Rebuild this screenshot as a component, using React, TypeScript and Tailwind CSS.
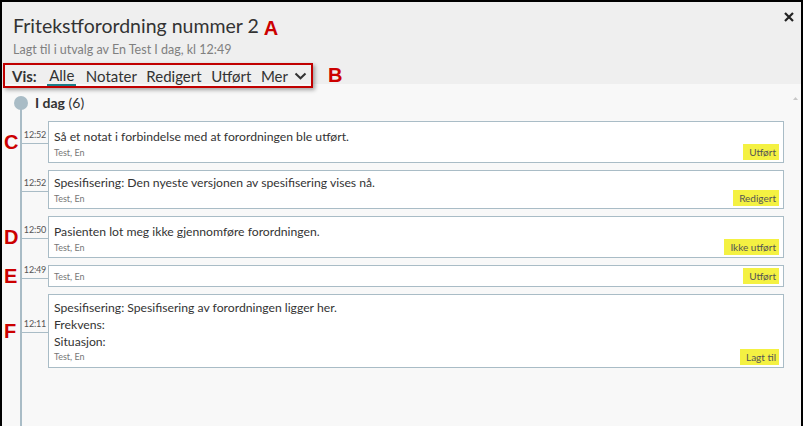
import React from "react";

type Entry = {
  letter?: string;
  time: string;
  lines: string[];
  author: string;
  status: string;
  pt: string;
  leading: string;
  pb: string;
};

const entries: Entry[] = [
  {
    letter: "C",
    time: "12:52",
    lines: ["Så et notat i forbindelse med at forordningen ble utført."],
    author: "Test, En",
    status: "Utført",
    pt: "pt-[6px]",
    leading: "leading-[18px]",
    pb: "pb-[2px]",
  },
  {
    time: "12:52",
    lines: ["Spesifisering: Den nyeste versjonen av spesifisering vises nå."],
    author: "Test, En",
    status: "Redigert",
    pt: "pt-[3px]",
    leading: "leading-[18px]",
    pb: "pb-[2px]",
  },
  {
    letter: "D",
    time: "12:50",
    lines: ["Pasienten lot meg ikke gjennomføre forordningen."],
    author: "Test, En",
    status: "Ikke utført",
    pt: "pt-[6px]",
    leading: "leading-[18px]",
    pb: "pb-[2px]",
  },
  {
    letter: "E",
    time: "12:49",
    lines: [],
    author: "Test, En",
    status: "Utført",
    pt: "pt-[4px]",
    leading: "leading-[18px]",
    pb: "pb-[2px]",
  },
  {
    letter: "F",
    time: "12:11",
    lines: [
      "Spesifisering: Spesifisering av forordningen ligger her.",
      "Frekvens:",
      "Situasjon:",
    ],
    author: "Test, En",
    status: "Lagt til",
    pt: "pt-[4px]",
    leading: "leading-[17px]",
    pb: "pb-[3px]",
  },
];

function Marker({ children }: { children: React.ReactNode }) {
  return (
    <span className="font-['Liberation_Sans',Arial,sans-serif] font-bold text-[20px] leading-[20px] text-[#cc0000]">
      {children}
    </span>
  );
}

function TimelineRow({ entry }: { entry: Entry }) {
  return (
    <div className="flex items-stretch">
      <div className="w-[20px] flex items-center pl-[2px]">
        {entry.letter && <Marker>{entry.letter}</Marker>}
      </div>
      {/* time label sits on top of the connector */}
      <div className="w-[26px] flex flex-col">
        <div className="flex-1 flex items-end justify-end border-b border-[#a9bcc6] pr-[2px] pb-[3px]">
          <span className="text-[9px] leading-[10px] text-[#555] tracking-[-0.2px]">
            {entry.time}
          </span>
        </div>
        <div className="flex-1" />
      </div>
      <div
        className={`relative flex-1 mr-[17px] bg-white border border-[#a9bcc6] pl-[5px] ${entry.pt} ${entry.pb}`}
      >
        {entry.lines.map((line) => (
          <div key={line} className={`text-[12.2px] text-[#333] ${entry.leading}`}>
            {line}
          </div>
        ))}
        <div className="text-[9px] leading-[14px] text-[#777]">{entry.author}</div>
        <div className="absolute right-[4px] bottom-[2px] h-[16px] min-w-[36px] pl-[6px] pr-[3px] flex items-center justify-end bg-[#f4f142] text-[10px] text-[#555]">
          {entry.status}
        </div>
      </div>
    </div>
  );
}

export default function App() {
  const tabs = ["Notater", "Redigert", "Utført"];

  return (
    <div className="w-[803px] h-[426px] overflow-hidden border-2 border-b-0 border-black bg-[#f8f8f8] flex flex-col font-['Lato',sans-serif]">
      <header className="h-[82px] shrink-0 bg-[#efefef] flex">
        <div className="flex-1 flex flex-col pl-[1px]">
          <div className="flex items-center pl-[10px] pt-[8px]">
            <h1 className="text-[19.5px] leading-[24px] text-[#333] font-normal">
              Fritekstforordning nummer 2
            </h1>
            <span className="ml-[5px] mt-[7px]">
              <Marker>A</Marker>
            </span>
          </div>
          <p className="mt-[1px] pl-[10px] text-[12.5px] leading-[16px] text-[#808080]">
            Lagt til i utvalg av En Test I dag, kl 12:49
          </p>
          <div className="mt-[5px] flex items-center">
            <nav className="w-[310px] h-[25px] flex items-center gap-[9.5px] border-2 border-[#c00000] pl-[7px] text-[15px] leading-[18px] text-[#333] shadow-[2px_2px_4px_rgba(0,0,0,0.35)]">
              <span className="font-bold mr-[1px]">Vis:</span>
              <span className="px-[2px] border-b-2 border-[#1b7d89]">Alle</span>
              {tabs.map((t) => (
                <span key={t}>{t}</span>
              ))}
              <span className="flex items-center gap-[6px]">
                Mer
                <svg width="13" height="8" viewBox="0 0 13 8" fill="none">
                  <path d="M1.5 1.5 L6.5 6.3 L11.5 1.5" stroke="#333" strokeWidth="2" />
                </svg>
              </span>
            </nav>
            <span className="ml-[15px]">
              <Marker>B</Marker>
            </span>
          </div>
        </div>
        <button className="self-start mt-[10px] mr-[7px] w-[10px] h-[10px] flex items-center justify-center">
          <svg width="10" height="10" viewBox="0 0 10 10">
            <path d="M1 1 L9 9 M9 1 L1 9" stroke="#222" strokeWidth="2.2" />
          </svg>
        </button>
      </header>

      <main className="relative flex-1 pt-[12px]">
        <div className="absolute left-[18px] top-[20px] bottom-0 w-[2px] bg-[#a9bcc6]" />
        <svg
          className="absolute right-[3px] top-[13px]"
          width="5"
          height="3"
          viewBox="0 0 5 3"
        >
          <path d="M0 3 L2.5 0 L5 3 Z" fill="#c8c8c8" />
        </svg>

        <div className="relative flex items-center h-[14px]">
          <div className="ml-[12px] w-[14px] h-[14px] rounded-full bg-[#a9bcc6]" />
          <div className="ml-[7px] text-[14px] leading-[14px] text-[#333]">
            <span className="font-bold">I dag</span> (6)
          </div>
        </div>

        <div className="relative mt-[11px] flex flex-col gap-[7px]">
          {entries.map((e, i) => (
            <TimelineRow key={i} entry={e} />
          ))}
        </div>
      </main>
    </div>
  );
}
